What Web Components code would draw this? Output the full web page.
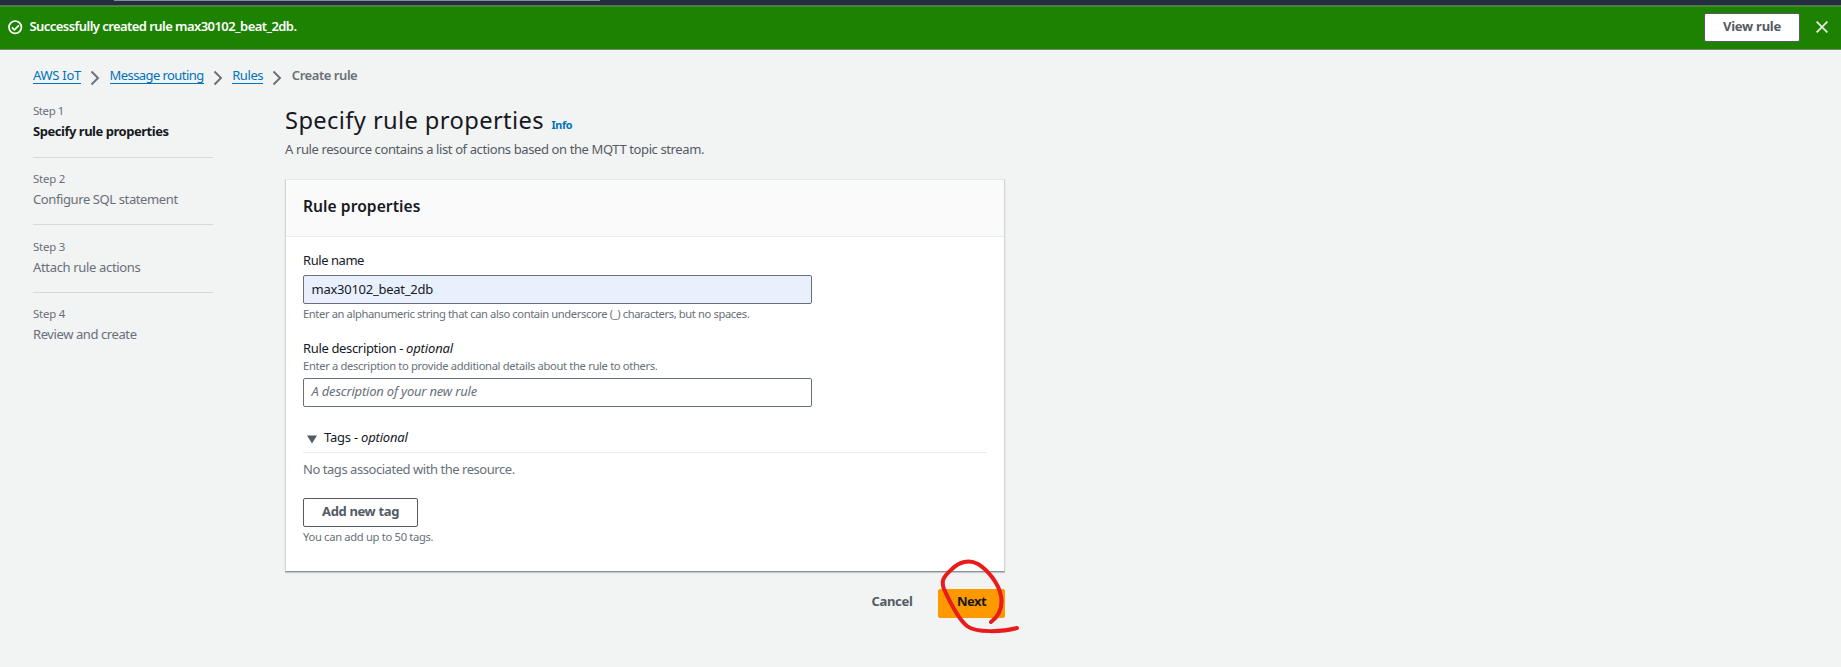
<!DOCTYPE html>
<html lang="en"><head><meta charset="utf-8"><title>Create rule</title>
<style>
html,body{margin:0;height:100%}
body{background:#f2f3f3;font-family:"Noto Sans","Open Sans",sans-serif;font-size:13px;line-height:20px;color:#16191f;overflow:hidden}
</style></head><body>
<iot-page></iot-page>
<script>
const define=(name,html,setup)=>{
  const t=document.createElement('template');t.innerHTML=html;
  customElements.define(name,class extends HTMLElement{
    connectedCallback(){
      if(this.shadowRoot)return;
      this.attachShadow({mode:'open'}).append(t.content.cloneNode(true));
      if(setup)setup(this,this.shadowRoot);
    }
  });
};
/* One line of text, tracked so that it fills the given width */
define('t-x',`<style>:host{display:inline-block;white-space:pre;flex:none}span{display:inline-block}</style><span><slot></slot></span>`,(el,root)=>{
  const s=root.querySelector('span'),w=parseFloat(el.getAttribute('w'));
  if(!w)return;
  const n=el.textContent.length;
  s.style.letterSpacing=((w-s.getBoundingClientRect().width)/n).toFixed(3)+'px';
});
define('ui-button',`<style>:host{display:inline-flex;box-sizing:border-box;height:29px;justify-content:center;align-items:flex-start;padding-top:2px;border:1px solid #545b64;border-radius:2px;background:#fff;color:#545b64;font-weight:700;line-height:20px}
:host([kind=primary]){background:#ff9900;border-color:#ff9900;color:#16191f;padding-top:1px}
:host([kind=link]){background:none;border-color:transparent;padding-top:1px}</style><slot></slot>`);
define('flash-bar',`<style>:host{display:flex;box-sizing:border-box;height:45px;background:#1d8102;border-top:1px solid #56705f;border-bottom:1px solid #6f8a6c;box-shadow:inset 0 1px #3f9129;color:#fff;font-weight:600;padding-left:8px;align-items:flex-start}
.ok{width:15px;height:15px;margin:14px 6.5px 0 0}.m{margin-top:10px;flex:1}ui-button{width:96px;margin-top:7px;height:29px}.x{width:12px;height:12px;margin:15px 13px 0 16px}</style>
<svg class="ok" viewBox="0 0 15 15" fill="none" stroke="#fff" stroke-width="1.7"><circle cx="7.2" cy="7.2" r="6.2"/><path d="M3.9 7.3l2.5 2.5 4.5-4.5"/></svg>
<div class="m"><slot></slot></div><ui-button><t-x w="58">View rule</t-x></ui-button>
<svg class="x" viewBox="0 0 12 12" stroke="#e3f0e0" stroke-width="1.8"><path d="M.6.6l10.8 10.8M11.4.6L.6 11.4"/></svg>`);
define('crumb-link',`<style>:host{display:flex;color:#0073bb}.l{line-height:18px;height:17px;border-bottom:1px solid #0073bb}svg{width:10px;height:16px;margin:4px 9.6px 0 9px}</style><div class="l"><slot></slot></div><svg viewBox="0 0 10 16" fill="none" stroke="#687078" stroke-width="1.9"><path d="M1.5 1.5L8 8l-6.5 6.5"/></svg>`);
define('nav-step',`<style>:host{display:block;box-sizing:border-box;width:180px;height:67.7px;color:#687078}.n{font-size:11.4px;line-height:16px;height:17px}.t{border-bottom:1px solid #d5dbdb;height:36.5px;line-height:22px}:host([active]) .t{color:#16191f;font-weight:700}:host([last]) .t{border:0}</style><div class="n"><slot name="n"></slot></div><div class="t"><slot></slot></div>`);
define('text-input',`<style>:host{display:block;box-sizing:border-box;width:509px;height:29px;border:1px solid #687078;border-radius:2px;background:#fff;padding:3px 7.5px;line-height:20px}
:host([filled]){background:#e8f0fe}:host([empty]){color:#687078;font-style:italic;padding-top:2px}</style><slot></slot>`);
define('hint-text',`<style>:host{display:block;font-size:11.2px;line-height:16px;height:16px;color:#687078}</style><slot></slot>`);
define('form-card',`<style>:host{display:block;box-sizing:border-box;width:720px;height:393px;background:#fff;border:1px solid #d0d5d5;border-top-color:#e4e7e7;border-bottom:1px solid #879196;box-shadow:0 1px 1px rgba(0,28,36,.18)}
header{height:56px;background:#fafafa;border-bottom:1px solid #eaeded;padding-left:17px;font-weight:600;font-size:15.6px;line-height:52px}
main{padding:13px 17px 0}</style><header><slot name="h"></slot></header><main><slot></slot></main>`);
define('tag-section',`<style>:host{display:block}.h{display:flex;height:25px;border-bottom:1px solid #eaeded;align-items:flex-start}svg{width:10px;height:9px;margin:8px 7px 0 4px}</style><div class="h"><svg viewBox="0 0 10 9"><path d="M0 .5h10L5 8.5z" fill="#545b64"/></svg><slot name="h"></slot></div><slot></slot>`);
define('red-circle',`<style>:host{position:absolute;left:930px;top:550px;width:100px;height:90px;pointer-events:none}svg{display:block}</style><svg width="100" height="90" viewBox="0 0 100 90" fill="none" stroke="#e81c1c" stroke-width="4" stroke-linecap="round" stroke-linejoin="round"><path d="M61 72C69 66 73 58 71 46C69 34 58 20 48 14C39 9 29 12 22 19C13 27 11 31 14 39C19 50 27 68 37 76C46 83 72 82 87 78"/></svg>`);
define('iot-page',`<style>:host{display:block;position:relative;height:667px}
.top{height:5px;background:#232f3e}.top i{display:block;width:486px;height:1px;margin-left:114px;background:#879196}
nav{display:flex;height:20px;padding:16px 0 0 33px}.cur{font-weight:600;color:#687078;line-height:18px}
.cols{display:flex;padding-left:33px}aside{width:252px;padding-top:17.3px}
h1{margin:0;font-weight:400;font-size:23.7px;line-height:30px;height:30px;padding-top:19px;display:flex;align-items:baseline;gap:7.5px}
.info{font-size:10.8px;font-weight:700;color:#0073bb}.d{color:#545b64;height:40px;padding-top:4px}
.lab{height:20px}.act{display:flex;justify-content:flex-end;width:720px;padding-top:17px}</style>
<div class="top"><i></i></div>
<flash-bar><t-x w="267">Successfully created rule max30102_beat_2db.</t-x></flash-bar>
<nav><crumb-link><t-x w="48">AWS IoT</t-x></crumb-link><crumb-link><t-x w="94">Message routing</t-x></crumb-link><crumb-link><t-x w="31">Rules</t-x></crumb-link><div class="cur"><t-x w="65.5">Create rule</t-x></div></nav>
<div class="cols"><aside>
<nav-step active><t-x w="31" slot="n">Step 1</t-x><t-x w="135.5">Specify rule properties</t-x></nav-step>
<nav-step><t-x w="32" slot="n">Step 2</t-x><t-x w="144.7">Configure SQL statement</t-x></nav-step>
<nav-step><t-x w="32" slot="n">Step 3</t-x><t-x w="107.4">Attach rule actions</t-x></nav-step>
<nav-step last><t-x w="32" slot="n">Step 4</t-x><t-x w="103.6">Review and create</t-x></nav-step>
</aside><section>
<h1><t-x w="259">Specify rule properties</t-x><span class="info"><t-x w="20.5">Info</t-x></span></h1>
<div class="d"><t-x w="419">A rule resource contains a list of actions based on the MQTT topic stream.</t-x></div>
<form-card><t-x w="117.5" slot="h">Rule properties</t-x>
<div class="lab" style="height:25px"><t-x w="61">Rule name</t-x></div>
<text-input filled><t-x w="121.5">max30102_beat_2db</t-x></text-input>
<hint-text style="margin-top:2px"><t-x w="446.3">Enter an alphanumeric string that can also contain underscore (_) characters, but no spaces.</t-x></hint-text>
<div style="height:20px;margin-top:16px"><t-x w="103">Rule description - </t-x><i><t-x w="47">optional</t-x></i></div>
<hint-text style="margin-bottom:4px"><t-x w="354.5">Enter a description to provide additional details about the rule to others.</t-x></hint-text>
<text-input empty><t-x w="165.5">A description of your new rule</t-x></text-input>
<tag-section style="margin-top:20px"><div slot="h"><t-x w="37">Tags - </t-x><i><t-x w="46.7">optional</t-x></i></div>
<div style="height:39px;padding-top:6px;color:#687078"><t-x w="211.7">No tags associated with the resource.</t-x></div>
<ui-button style="width:115px;display:flex"><t-x w="77">Add new tag</t-x></ui-button>
<hint-text style="margin-top:2px"><t-x w="130.3">You can add up to 50 tags.</t-x></hint-text></tag-section>
</form-card>
<div class="act"><ui-button kind="link" style="width:82px;margin-right:5px"><t-x w="41">Cancel</t-x></ui-button><ui-button kind="primary" style="width:67px"><t-x w="29">Next</t-x></ui-button></div>
</section></div><red-circle></red-circle>`);
</script></body></html>
